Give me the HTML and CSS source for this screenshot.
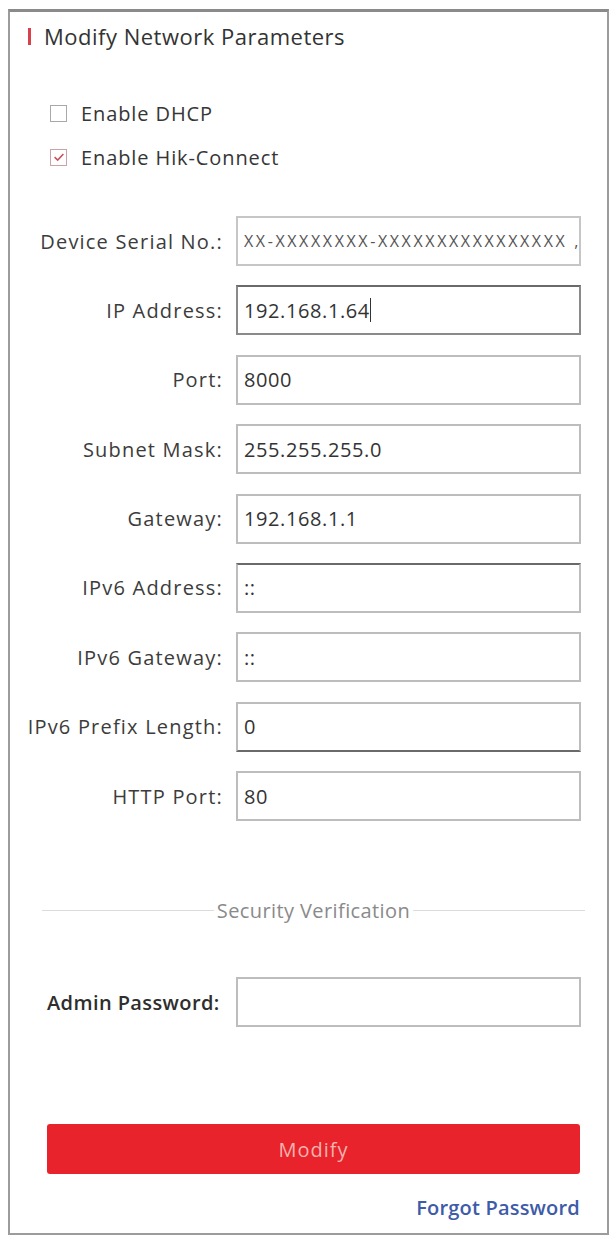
FILE: index.html
```html
<!DOCTYPE html>
<html>
<head>
<meta charset="utf-8">
<link rel="stylesheet" href="styles.css">
</head>
<body>
<div class="panel">
  <div class="title">Modify Network Parameters</div>
  <div class="checks">
    <label class="check"><span class="box"></span><span>Enable DHCP</span></label>
    <label class="check"><span class="box checked"><svg viewBox="0 0 16 16" width="14" height="14"><path d="M3 8.2 L6.5 11.5 L13 4.5" fill="none" stroke="#c8515d" stroke-width="1.8"/></svg></span><span>Enable Hik-Connect</span></label>
  </div>
  <div class="fields">
    <div class="row"><div class="lbl">Device Serial No.:</div><div class="inp small">XX-XXXXXXXX-XXXXXXXXXXXXXXXX ,</div></div>
    <div class="row"><div class="lbl">IP Address:</div><div class="inp focus">192.168.1.64<span class="caret"></span></div></div>
    <div class="row"><div class="lbl">Port:</div><div class="inp">8000</div></div>
    <div class="row"><div class="lbl">Subnet Mask:</div><div class="inp">255.255.255.0</div></div>
    <div class="row"><div class="lbl">Gateway:</div><div class="inp">192.168.1.1</div></div>
    <div class="row"><div class="lbl">IPv6 Address:</div><div class="inp dtop">::</div></div>
    <div class="row"><div class="lbl">IPv6 Gateway:</div><div class="inp">::</div></div>
    <div class="row"><div class="lbl">IPv6 Prefix Length:</div><div class="inp dbot">0</div></div>
    <div class="row"><div class="lbl">HTTP Port:</div><div class="inp">80</div></div>
  </div>
  <div class="divider"><span>Security Verification</span></div>
  <div class="row admin"><div class="lbl">Admin Password:</div><div class="inp"></div></div>
  <div class="btn">Modify</div>
  <div class="forgot">Forgot Password</div>
</div>
</body>
</html>
```
FILE: styles.css
```css
html, body {
  margin: 0;
  padding: 0;
  background: #ffffff;
}
body {
  font-family: "Open Sans", "Noto Sans", "Liberation Sans", sans-serif;
  color: #444;
}
.panel {
  box-sizing: border-box;
  margin: 9px 0 0 8px;
  width: 601px;
  height: 1226px;
  border: 2px solid #9c9c9c;
  border-top: 3px solid #8a8a8a;
  display: flex;
  flex-direction: column;
}
.title {
  margin: 12px 0 0 18px;
  font-size: 22px;
  line-height: 24px;
  color: #333;
  display: flex;
  align-items: center;
  letter-spacing: 0.5px;
}
.title::before {
  content: "";
  width: 3px;
  height: 17px;
  background: #d8404a;
  margin-right: 13px;
}
.checks {
  margin: 53px 0 0 40px;
  display: flex;
  flex-direction: column;
  gap: 20px;
}
.check {
  display: flex;
  align-items: center;
  height: 24px;
  font-size: 20px;
  letter-spacing: 0.9px;
  color: #363636;
  gap: 14px;
}
.box {
  box-sizing: border-box;
  width: 17px;
  height: 17px;
  border: 1px solid #a8a8a8;
  display: flex;
  align-items: center;
  justify-content: center;
}
.box.checked {
  border-color: #c9a3a8;
}
.fields {
  margin-top: 47px;
  display: flex;
  flex-direction: column;
  gap: 19.4px;
}
.row {
  display: flex;
  align-items: center;
  gap: 13px;
}
.lbl {
  width: 213px;
  text-align: right;
  font-size: 20px;
  letter-spacing: 1.2px;
  color: #3c3c3c;
  white-space: nowrap;
}
.inp {
  box-sizing: border-box;
  width: 345px;
  height: 50px;
  border: 2px solid #bdbdbd;
  padding: 0 6px;
  display: flex;
  align-items: center;
  font-size: 20px;
  letter-spacing: 0.6px;
  color: #333;
  white-space: nowrap;
  overflow: hidden;
}
.inp.small {
  font-size: 16px;
  color: #555;
  letter-spacing: 2.6px;
  border-color: #c6c6c6;
}
.inp.focus {
  border-color: #6a6a6a #8a8a8a #8a8a8a #8a8a8a;
}
.inp.dtop {
  border-top-color: #6a6a6a;
}
.inp.dbot {
  border-bottom-color: #6a6a6a;
}
.caret {
  width: 1px;
  height: 24px;
  background: #333;
  margin-left: 0;
}
.divider {
  margin: 77px 22px 0 32px;
  display: flex;
  align-items: center;
  height: 24px;
  font-size: 20px;
  letter-spacing: 0.4px;
  color: #8a8a8a;
}
.divider::before,
.divider::after {
  content: "";
  flex: 1;
  height: 1px;
  background: #dcdcdc;
}
.divider span {
  padding: 0 3px;
}
.admin {
  margin-top: 55px;
  gap: 17px;
}
.admin .lbl {
  width: 172px;
  margin-left: 37px;
  text-align: left;
  font-weight: 600;
  letter-spacing: 0.4px;
  color: #2e2e2e;
}
.btn {
  margin: 97px 27px 0 37px;
  height: 50px;
  background: #e8232b;
  border-radius: 3px;
  display: flex;
  align-items: center;
  justify-content: center;
  font-size: 20px;
  letter-spacing: 1px;
  color: #f6b3b0;
}
.forgot {
  margin: 22px 27px 0 0;
  text-align: right;
  line-height: 24px;
  font-size: 20px;
  letter-spacing: 0.2px;
  font-weight: 600;
  color: #3d5ba8;
}
```
